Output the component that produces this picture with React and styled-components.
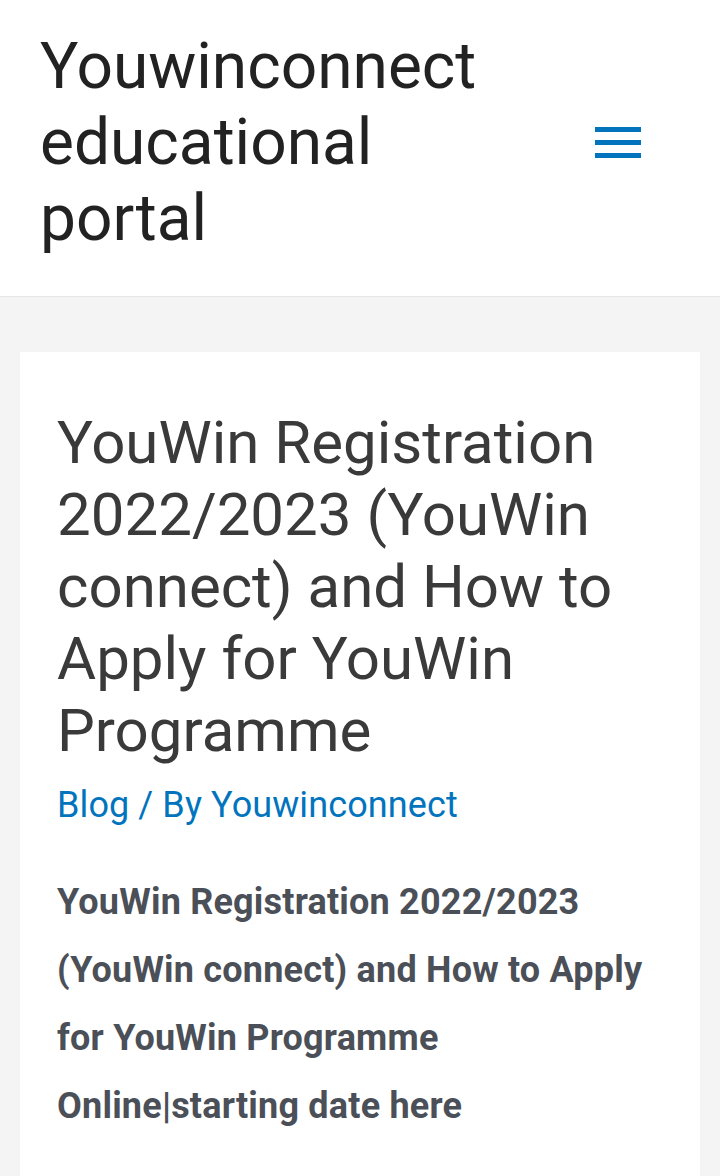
import React from 'react';
import styled, { createGlobalStyle } from 'styled-components';

const GlobalStyle = createGlobalStyle`
  html, body {
    margin: 0;
    padding: 0;
    background: #f4f4f4;
  }
  body {
    font-family: Roboto, "Liberation Sans", sans-serif;
  }
`;

const Page = styled.div`
  height: 1176px;
  overflow: hidden;
  background: #f4f4f4;
`;

const Header = styled.header`
  display: flex;
  align-items: center;
  justify-content: space-between;
  height: 297px;
  padding: 0 79px 0 40px;
  background: #fff;
  border-bottom: 1px solid #e6e6e6;
  box-sizing: border-box;
`;

const SiteTitle = styled.a`
  display: block;
  margin-top: -10px;
  font-size: 64px;
  line-height: 76px;
  color: #222;
  text-decoration: none;
`;

const MenuButton = styled.button`
  display: flex;
  flex-direction: column;
  gap: 8px;
  margin-top: -12px;
  padding: 0;
  border: none;
  background: none;
  cursor: pointer;
`;

const Bar = styled.span`
  display: block;
  width: 46px;
  height: 5px;
  background: #0274be;
`;

const Main = styled.main`
  padding: 55px 20px 0;
`;

const Card = styled.article`
  background: #fff;
  padding: 55px 37px 60px;
`;

const PostTitle = styled.h1`
  margin: 0;
  font-size: 60px;
  font-weight: 400;
  line-height: 72px;
  color: #3a3a3a;
`;

const Meta = styled.div`
  margin-top: 16px;
  font-size: 36px;
  line-height: 44px;
  color: #0274be;
  letter-spacing: 0.1px;
`;

const MetaLink = styled.a`
  color: inherit;
  text-decoration: none;
`;

const Lead = styled.p`
  margin: 41px 0 0;
  font-size: 36px;
  font-weight: 700;
  line-height: 68px;
  letter-spacing: 0.2px;
  color: #4b4f58;
`;

export default function App() {
  return (
    <Page>
      <GlobalStyle />
      <Header>
        <SiteTitle href="#">
          Youwinconnect
          <br />
          educational
          <br />
          portal
        </SiteTitle>
        <MenuButton aria-label="Main Menu">
          <Bar />
          <Bar />
          <Bar />
        </MenuButton>
      </Header>
      <Main>
        <Card>
          <PostTitle>
            YouWin Registration 2022/2023 (YouWin connect) and How to Apply
            for YouWin Programme
          </PostTitle>
          <Meta>
            <MetaLink href="#">Blog</MetaLink> / By{' '}
            <MetaLink href="#">Youwinconnect</MetaLink>
          </Meta>
          <Lead>
            YouWin Registration 2022/2023 (YouWin connect) and How to Apply
            for YouWin Programme Online|starting date here
          </Lead>
        </Card>
      </Main>
    </Page>
  );
}
